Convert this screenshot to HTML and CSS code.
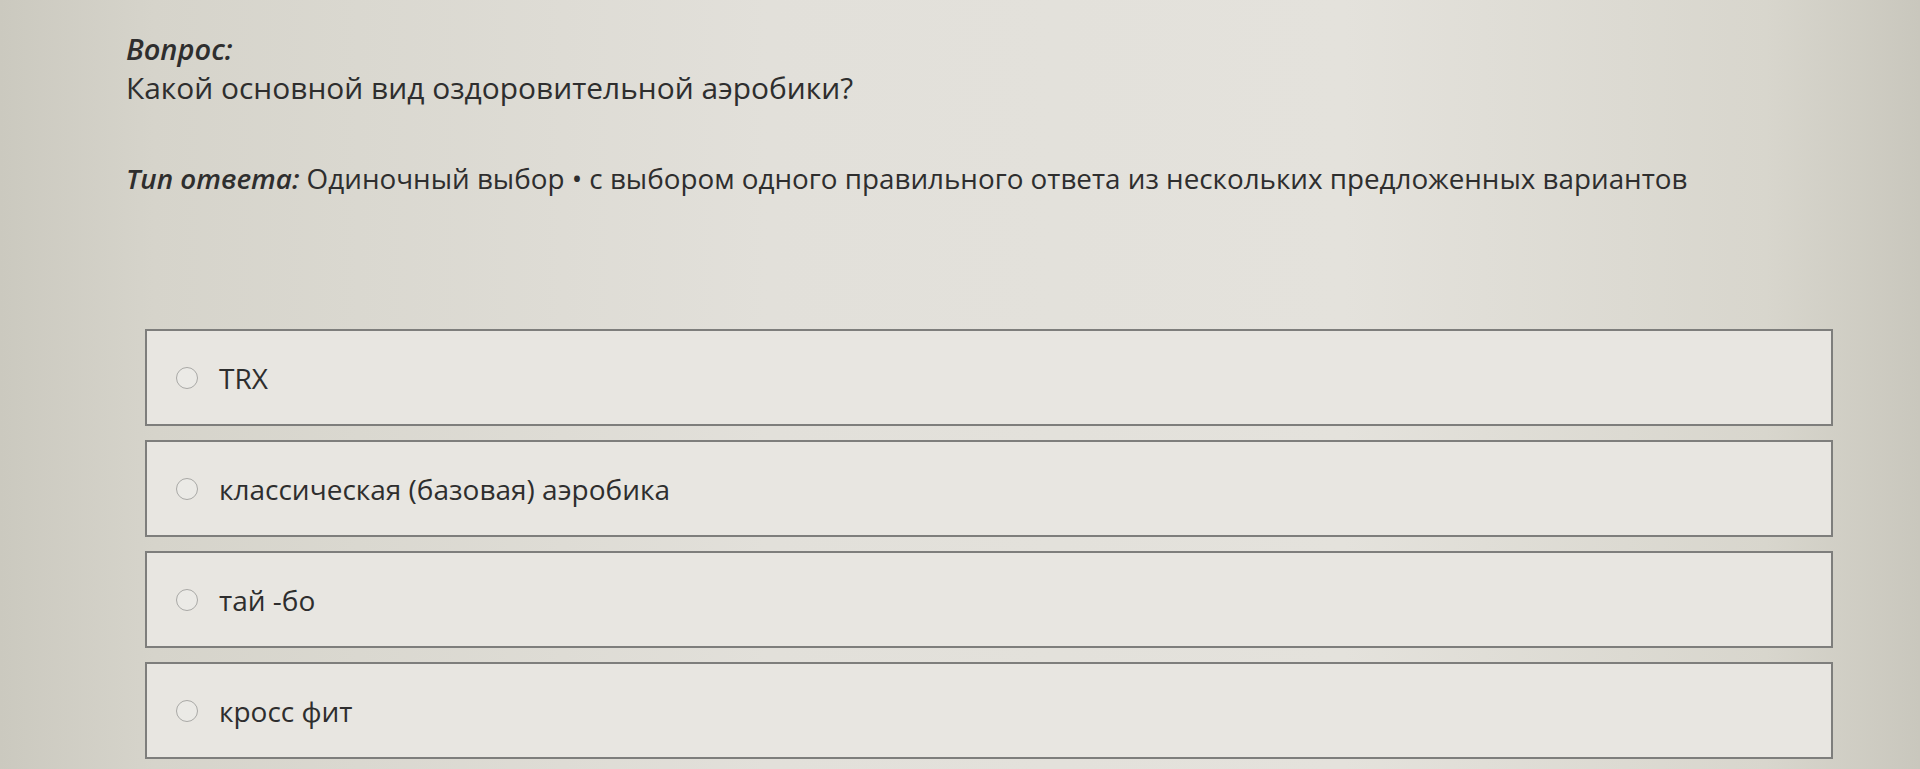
FILE: index.html
```html
<!DOCTYPE html>
<html lang="ru">
<head>
<meta charset="utf-8">
<title>Вопрос</title>
<link rel="stylesheet" href="styles.css">
</head>
<body>
<main class="page">
  <section class="question">
    <div class="q-label">Вопрос:</div>
    <div class="q-text">Какой основной вид оздоровительной аэробики?</div>
  </section>
  <div class="answer-type"><span class="type-label">Тип ответа:</span> Одиночный выбор • с выбором одного правильного ответа из нескольких предложенных вариантов</div>
  <ul class="options">
    <li class="option"><span class="radio"></span><span class="opt-text">TRX</span></li>
    <li class="option"><span class="radio"></span><span class="opt-text">классическая (базовая) аэробика</span></li>
    <li class="option"><span class="radio"></span><span class="opt-text">тай -бо</span></li>
    <li class="option"><span class="radio"></span><span class="opt-text">кросс фит</span></li>
  </ul>
</main>
</body>
</html>
```
FILE: styles.css
```css
html, body {
  margin: 0;
  padding: 0;
  height: 100%;
}
body {
  font-family: "Open Sans", "Noto Sans", sans-serif;
  color: #2e2e2e;
  background:
    linear-gradient(90deg, #cbc9bf 0%, #d6d4cb 8%, #e2e0da 40%, #e4e2dc 70%, #d8d6cd 92%, #c9c7bd 100%);
  overflow: hidden;
}
.page {
  padding: 31px 0 0 126px;
}
.q-label {
  font-size: 29px;
  font-weight: 600;
  font-style: italic;
  line-height: 36px;
}
.q-text {
  font-size: 29.9px;
  line-height: 38px;
  margin-top: 2px;
}
.answer-type {
  font-size: 27.8px;
  line-height: 38px;
  margin-top: 52px;
}
.type-label {
  font-style: italic;
  font-weight: 600;
}
.options {
  list-style: none;
  margin: 132px 0 0 19px;
  padding: 0;
  width: 1688px;
  display: flex;
  flex-direction: column;
  gap: 14px;
}
.option {
  box-sizing: border-box;
  height: 97px;
  border: 2px solid #7e7e7c;
  background: #e8e6e1;
  display: flex;
  align-items: center;
  padding-left: 29px;
  gap: 21px;
}
.radio {
  box-sizing: border-box;
  width: 22px;
  height: 22px;
  border: 1.5px solid #a9a9a6;
  border-radius: 50%;
  flex: none;
  background: #ebeae6;
}
.opt-text {
  font-size: 28px;
  line-height: 38px;
}
```
